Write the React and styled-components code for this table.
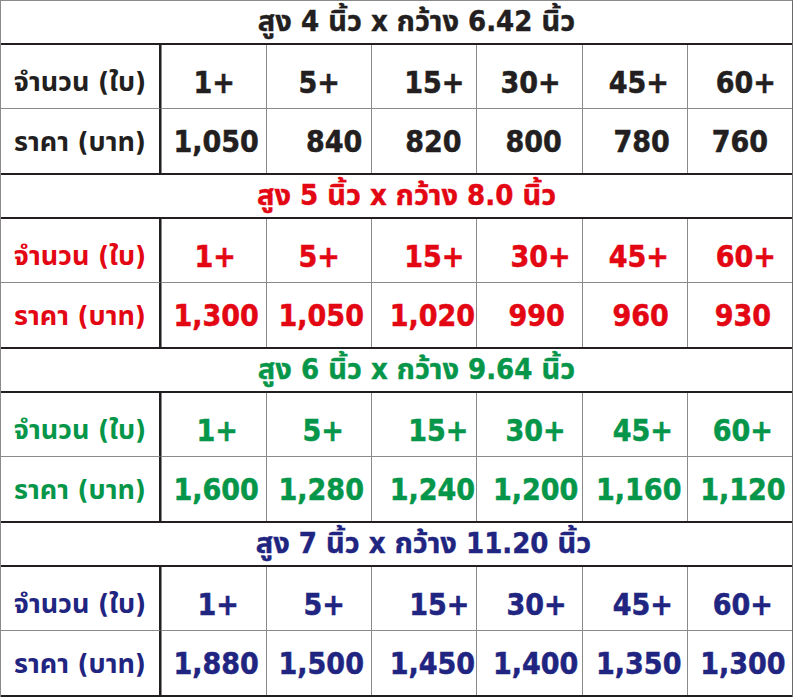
import React from 'react';
import styled, { createGlobalStyle } from 'styled-components';

const GlobalStyle = createGlobalStyle`
  html, body { margin: 0; padding: 0; background: #fff; }
  body { font-family: "DejaVu Sans Condensed", "Noto Sans Thai", "Noto Sans", sans-serif; }
`;

const Sheet = styled.div`
  width: 793px;
  box-sizing: border-box;
  border-left: 1px solid #8a8a8a;
  border-right: 1px solid #6a6a6a;
  border-top: 1px solid #8a8a8a;
`;

const Section = styled.section`
  color: ${p => p.$color};
  border-bottom: 2px solid #231f20;
`;

const Title = styled.div`
  height: 42px;
  border-bottom: 2px solid #231f20;
  display: flex;
  align-items: center;
  justify-content: center;
  padding-left: ${p => p.$shift}px;
  font-size: 29px;
  font-weight: bold;
  -webkit-text-stroke: 0.4px currentColor;
`;

const Grid = styled.div`
  display: grid;
  grid-template-columns: 160px repeat(6, 1fr);
  grid-template-rows: 64px 64px;
`;

const Label = styled.div`
  display: flex;
  align-items: center;
  justify-content: center;
  padding-top: ${p => (p.$last ? 2 : 12)}px;
  border-right: 2px solid #231f20;
  border-bottom: ${p => (p.$last ? 'none' : '1px solid #8a8a8a')};
  font-size: 27px;
  font-weight: bold;
  white-space: nowrap;
`;

const Cell = styled.div`
  display: flex;
  align-items: center;
  justify-content: center;
  border-left: 1px solid #8a8a8a;
  border-bottom: ${p => (p.$last ? 'none' : '1px solid #8a8a8a')};
  padding-top: ${p => (p.$last ? 0 : 12)}px;
  padding-left: ${p => p.$shift || 0}px;
  font-size: 30px;
  font-weight: bold;
  -webkit-text-stroke: 0.5px currentColor;
  white-space: nowrap;
`;

const qty = ['1+', '5+', '15+', '30+', '45+', '60+'];

const sizes = [
  {
    title: 'สูง 4 นิ้ว x กว้าง 6.42 นิ้ว', titleShift: 40, color: '#231f20',
    qtyShift: [0, 0, 20, 2, 8, 12],
    prices: ['1,050', '840', '820', '800', '780', '760'], shift: [4, 30, 18, 8, 14, -4],
  },
  {
    title: 'สูง 5 นิ้ว x กว้าง 8.0 นิ้ว', titleShift: 20, color: '#e30613',
    qtyShift: [2, 0, 20, 22, 8, 12],
    prices: ['1,300', '1,050', '1,020', '990', '960', '930'], shift: [4, 4, 16, 14, 12, 6],
  },
  {
    title: 'สูง 6 นิ้ว x กว้าง 9.64 นิ้ว', titleShift: 40, color: '#06964a',
    qtyShift: [6, 8, 28, 12, 16, 6],
    prices: ['1,600', '1,280', '1,240', '1,200', '1,160', '1,120'], shift: [4, 4, 16, 12, 8, 6],
  },
  {
    title: 'สูง 7 นิ้ว x กว้าง 11.20 นิ้ว', titleShift: 54, color: '#1f2580',
    qtyShift: [8, 10, 30, 14, 16, 6],
    prices: ['1,880', '1,500', '1,450', '1,400', '1,350', '1,300'], shift: [4, 4, 16, 12, 8, 6],
  },
];

export default function App() {
  return (
    <>
      <GlobalStyle />
      <Sheet>
        {sizes.map(s => (
          <Section key={s.title} $color={s.color}>
            <Title $shift={s.titleShift}>{s.title}</Title>
            <Grid>
              <Label>จำนวน (ใบ)</Label>
              {qty.map((q, i) => (
                <Cell key={q} $shift={s.qtyShift[i]}>{q}</Cell>
              ))}
              <Label $last>ราคา (บาท)</Label>
              {s.prices.map((p, i) => (
                <Cell key={i} $last $shift={s.shift[i]}>{p}</Cell>
              ))}
            </Grid>
          </Section>
        ))}
      </Sheet>
    </>
  );
}
